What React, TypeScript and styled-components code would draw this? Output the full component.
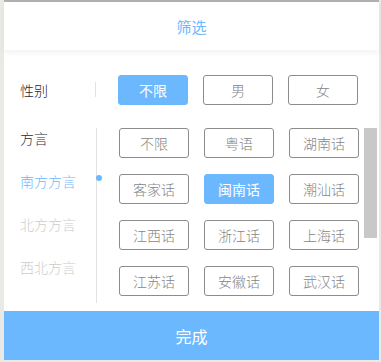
import React, { useState } from "react";
import styled, { createGlobalStyle } from "styled-components";

const GlobalStyle = createGlobalStyle`
  html, body {
    margin: 0;
    padding: 0;
    background: #ebe9e5;
  }
  body {
    font-family: "Noto Sans CJK SC", "Noto Sans", sans-serif;
    font-weight: 300;
  }
`;

const BLUE = "#6cb8ff";

const Panel = styled.div`
  width: 375px;
  height: 358px;
  margin-left: 4px;
  background: #fff;
  border-top: 2px solid #b0b0b0;
  display: flex;
  flex-direction: column;
`;

const Header = styled.div`
  height: 48px;
  flex-shrink: 0;
  display: flex;
  align-items: center;
  justify-content: center;
  color: ${BLUE};
  font-size: 15px;
  font-weight: 400;
  box-shadow: 0 3px 6px rgba(0, 0, 0, 0.05);
  position: relative;
  z-index: 1;
`;

const Row = styled.div<{ $top: number; $height: number }>`
  display: flex;
  margin-top: ${(p) => p.$top}px;
  height: ${(p) => p.$height}px;
  flex-shrink: 0;
`;

const LabelCell = styled.div`
  width: 76px;
  padding-left: 16px;
  display: flex;
  align-items: center;
  font-size: 14px;
  color: #2a2a36;
  position: relative;
  &::after {
    content: "";
    position: absolute;
    right: 0;
    top: 7px;
    width: 1px;
    height: 15px;
    background: #e2e2e2;
  }
`;

const SideList = styled.div`
  width: 76px;
  padding-left: 16px;
  border-right: 1px solid #e2e2e2;
  display: flex;
  flex-direction: column;
  gap: 23px;
`;

const SideItem = styled.div<{ $state: "title" | "active" | "idle" }>`
  height: 20px;
  line-height: 20px;
  font-size: 14px;
  white-space: nowrap;
  position: relative;
  cursor: ${(p) => (p.$state === "title" ? "default" : "pointer")};
  color: ${(p) =>
    p.$state === "title" ? "#2a2a36" : p.$state === "active" ? BLUE : "#cccccc"};
`;

const Dot = styled.span`
  position: absolute;
  right: -6px;
  top: 4px;
  width: 6px;
  height: 6px;
  border-radius: 50%;
  background: ${BLUE};
`;

const Options = styled.div`
  flex: 1;
  padding-left: 22px;
  display: grid;
  grid-template-columns: repeat(3, 70px);
  grid-auto-rows: 30px;
  column-gap: 15px;
  row-gap: 16px;
  align-content: start;
`;

const Option = styled.button<{ $active?: boolean }>`
  box-sizing: border-box;
  width: 70px;
  height: 30px;
  padding: 0;
  border-radius: 3px;
  border: 1px solid ${(p) => (p.$active ? BLUE : "#8c8c8c")};
  background: ${(p) => (p.$active ? BLUE : "#fff")};
  color: ${(p) => (p.$active ? "#fff" : "#858585")};
  font-family: inherit;
  font-weight: ${(p) => (p.$active ? 400 : 300)};
  font-size: 14px;
  cursor: pointer;
`;

const Track = styled.div`
  width: 13px;
  margin-right: 2px;
`;

const Thumb = styled.div`
  height: 110px;
  background: #c8c8c8;
`;

const Footer = styled.button`
  margin-top: auto;
  height: 49px;
  flex-shrink: 0;
  border: none;
  background: ${BLUE};
  color: #fff;
  font-family: inherit;
  font-weight: 400;
  font-size: 16px;
  cursor: pointer;
`;

const genders = ["不限", "男", "女"];
const dialects = [
  "不限",
  "粤语",
  "湖南话",
  "客家话",
  "闽南话",
  "潮汕话",
  "江西话",
  "浙江话",
  "上海话",
  "江苏话",
  "安徽话",
  "武汉话",
];
const regions = ["南方方言", "北方方言", "西北方言"];

export default function App() {
  const [gender, setGender] = useState("不限");
  const [dialect, setDialect] = useState("闽南话");
  const [region, setRegion] = useState("南方方言");

  return (
    <>
      <GlobalStyle />
      <Panel>
        <Header>筛选</Header>
        <Row $top={25} $height={30}>
          <LabelCell>性别</LabelCell>
          <Options>
            {genders.map((g) => (
              <Option key={g} $active={g === gender} onClick={() => setGender(g)}>
                {g}
              </Option>
            ))}
          </Options>
          <Track />
        </Row>
        <Row $top={23} $height={175}>
          <SideList>
            <SideItem $state="title">方言</SideItem>
            {regions.map((r) => (
              <SideItem
                key={r}
                $state={r === region ? "active" : "idle"}
                onClick={() => setRegion(r)}
              >
                {r}
                {r === region && <Dot />}
              </SideItem>
            ))}
          </SideList>
          <Options>
            {dialects.map((d) => (
              <Option key={d} $active={d === dialect} onClick={() => setDialect(d)}>
                {d}
              </Option>
            ))}
          </Options>
          <Track>
            <Thumb />
          </Track>
        </Row>
        <Footer>完成</Footer>
      </Panel>
    </>
  );
}
